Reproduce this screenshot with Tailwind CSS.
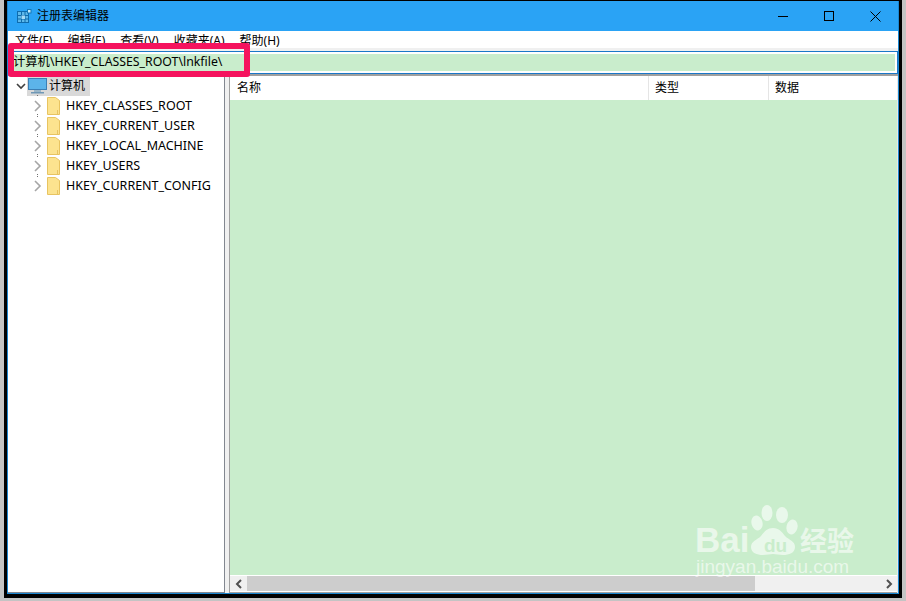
<!DOCTYPE html>
<html lang="zh-CN">
<head>
    <meta charset="UTF-8">
    <title>注册表编辑器</title>
    <script src="https://cdn.jsdelivr.net/npm/@tailwindcss/browser@4"></script>
</head>
<body class="bg-[#c4c4c4] overflow-hidden">
    <div class="relative w-[906px] h-[601px] pl-[4px] pr-[4px] pb-[3px] font-['Noto_Sans','Noto_Sans_CJK_SC',sans-serif] text-xs text-black">
        <div class="h-full bg-black pl-[3px] pr-[3px] pt-[1px] pb-[4px]">
            <div class="h-full flex flex-col bg-white border-x border-b border-[#1a86d0]">
                <!-- title bar -->
                <div class="h-[30px] shrink-0 bg-[#2aa3f5] flex items-center">
                    <svg class="ml-[8px]" width="16" height="16" viewBox="0 0 16 16">
                        <rect x="1.5" y="3.5" width="11" height="11" fill="#5cb8ea" stroke="#0f6cad"/>
                        <path d="M5.5 3v12M9 3v12M1 7.5h12M1 11h12" stroke="#0f6cad"/>
                        <rect x="5.5" y="7.5" width="3.5" height="3.5" fill="#a6dcf6"/>
                        <rect x="11.5" y="1.5" width="3.5" height="3.5" fill="#c6ecfb" stroke="#1478b8"/>
                    </svg>
                    <span class="ml-[5px]">注册表编辑器</span>
                    <div class="ml-auto flex items-center">
                        <div class="w-[46px] h-[30px] flex items-center justify-center">
                            <div class="w-[10px] h-px bg-black"></div>
                        </div>
                        <div class="w-[46px] h-[30px] flex items-center justify-center">
                            <div class="w-[10px] h-[10px] border border-black"></div>
                        </div>
                        <div class="w-[46px] h-[30px] flex items-center justify-center">
                            <svg width="11" height="11" viewBox="0 0 11 11"><path d="M.5.5l10 10M10.5.5l-10 10" stroke="#000"/></svg>
                        </div>
                    </div>
                </div>
                <!-- menu -->
                <div class="h-[17px] shrink-0 flex items-center gap-[15px] pl-[7px] pt-[3px]">
                    <span>文件(F)</span><span>编辑(E)</span><span>查看(V)</span><span>收藏夹(A)</span><span>帮助(H)</span>
                </div>
                <div class="h-[3px] shrink-0 bg-[#f0f0f0]"></div>
                <!-- address -->
                <div class="h-[23px] shrink-0 border border-[#1a78c8] p-[2px] bg-white">
                    <div class="h-full bg-[#c9edcc] flex items-center pl-[2px] whitespace-nowrap text-[12.3px]">计算机\HKEY_CLASSES_ROOT\lnkfile\</div>
                </div>
                <div class="h-[2px] shrink-0 bg-[#a0a0a0]"></div>
                <!-- panes -->
                <div class="flex-1 flex min-h-0">
                    <div class="w-[217px] border-r border-b border-[#828790] bg-white pl-[4px] text-[12.5px]">
                        <div class="h-[20px] flex items-center">
                            <svg class="ml-[4px]" width="10" height="10" viewBox="0 0 10 10"><path d="M1 3l4 4 4-4" fill="none" stroke="#404040" stroke-width="1.6"/></svg>
                            <div class="ml-[1px] h-[20px] w-[63px] bg-[#d9d9d9] flex items-center text-xs">
                                <svg class="ml-[1px]" width="20" height="18" viewBox="0 0 20 18">
                                    <rect x=".5" y="1.5" width="18" height="11" fill="#5cb4ea" stroke="#3b7fb5"/>
                                    <rect x="6" y="13" width="7" height="2" fill="#9ab6c8"/>
                                    <rect x="3" y="15" width="13" height="1.5" fill="#6f97b5"/>
                                </svg>
                                <span class="ml-[1px]">计算机</span>
                            </div>
                        </div>
                        <div class="relative h-[20px] flex items-center">
                            <div class="absolute left-[25px] top-[-1px] w-px h-px bg-[#707070]"></div>
                            <svg class="ml-[22px]" width="8" height="12" viewBox="0 0 8 12"><path d="M1 1l5 5-5 5" fill="none" stroke="#a6a6a6" stroke-width="1.6"/></svg>
                            <svg class="ml-[5px]" width="14" height="18" viewBox="0 0 14 18"><path d="M.5.5h8l4 3v14H.5z" fill="#fce38f" stroke="#e8c461"/><path d="M10.5 13v4.5" stroke="#e8c461"/></svg>
                            <span class="ml-[5px]">HKEY_CLASSES_ROOT</span>
                        </div>
                        <div class="relative h-[20px] flex items-center">
                            <div class="absolute left-[25px] top-[-2px] w-px h-[3px] border-y border-[#707070]"></div>
                            <svg class="ml-[22px]" width="8" height="12" viewBox="0 0 8 12"><path d="M1 1l5 5-5 5" fill="none" stroke="#a6a6a6" stroke-width="1.6"/></svg>
                            <svg class="ml-[5px]" width="14" height="18" viewBox="0 0 14 18"><path d="M.5.5h8l4 3v14H.5z" fill="#fce38f" stroke="#e8c461"/><path d="M10.5 13v4.5" stroke="#e8c461"/></svg>
                            <span class="ml-[5px]">HKEY_CURRENT_USER</span>
                        </div>
                        <div class="relative h-[20px] flex items-center">
                            <div class="absolute left-[25px] top-[-2px] w-px h-[3px] border-y border-[#707070]"></div>
                            <svg class="ml-[22px]" width="8" height="12" viewBox="0 0 8 12"><path d="M1 1l5 5-5 5" fill="none" stroke="#a6a6a6" stroke-width="1.6"/></svg>
                            <svg class="ml-[5px]" width="14" height="18" viewBox="0 0 14 18"><path d="M.5.5h8l4 3v14H.5z" fill="#fce38f" stroke="#e8c461"/><path d="M10.5 13v4.5" stroke="#e8c461"/></svg>
                            <span class="ml-[5px]">HKEY_LOCAL_MACHINE</span>
                        </div>
                        <div class="relative h-[20px] flex items-center">
                            <div class="absolute left-[25px] top-[-2px] w-px h-[3px] border-y border-[#707070]"></div>
                            <svg class="ml-[22px]" width="8" height="12" viewBox="0 0 8 12"><path d="M1 1l5 5-5 5" fill="none" stroke="#a6a6a6" stroke-width="1.6"/></svg>
                            <svg class="ml-[5px]" width="14" height="18" viewBox="0 0 14 18"><path d="M.5.5h8l4 3v14H.5z" fill="#fce38f" stroke="#e8c461"/><path d="M10.5 13v4.5" stroke="#e8c461"/></svg>
                            <span class="ml-[5px]">HKEY_USERS</span>
                        </div>
                        <div class="relative h-[20px] flex items-center">
                            <div class="absolute left-[25px] top-[-2px] w-px h-[3px] border-y border-[#707070]"></div>
                            <svg class="ml-[22px]" width="8" height="12" viewBox="0 0 8 12"><path d="M1 1l5 5-5 5" fill="none" stroke="#a6a6a6" stroke-width="1.6"/></svg>
                            <svg class="ml-[5px]" width="14" height="18" viewBox="0 0 14 18"><path d="M.5.5h8l4 3v14H.5z" fill="#fce38f" stroke="#e8c461"/><path d="M10.5 13v4.5" stroke="#e8c461"/></svg>
                            <span class="ml-[5px]">HKEY_CURRENT_CONFIG</span>
                        </div>
                    </div>
                    <div class="w-[4px] bg-[#f0f0f0]"></div>
                    <div class="flex-1 flex flex-col border-l border-r border-l-[#a0a0a0] border-r-[#e8e8e8] min-w-0">
                        <div class="h-[24px] shrink-0 flex bg-white">
                            <div class="w-[419px] border-r border-[#e5e5e5] pl-[7px] flex items-center">名称</div>
                            <div class="w-[120px] border-r border-[#e5e5e5] pl-[6px] flex items-center">类型</div>
                            <div class="flex-1 pl-[6px] flex items-center">数据</div>
                        </div>
                        <div class="flex-1 bg-[#c9edcc]"></div>
                        <div class="shrink-0 h-[18px] bg-white border-b border-[#a0a0a0] pt-px">
                            <div class="h-[15px] flex items-center bg-[#f0f0f0]">
                                <div class="w-[17px] flex justify-center">
                                    <svg width="8" height="10" viewBox="0 0 8 10"><path d="M6 1L2 5l4 4" fill="none" stroke="#505050" stroke-width="2"/></svg>
                                </div>
                                <div class="w-[508px] h-full bg-[#cdcdcd]"></div>
                                <div class="flex-1"></div>
                                <div class="w-[17px] flex justify-center">
                                    <svg width="8" height="10" viewBox="0 0 8 10"><path d="M2 1l4 4-4 4" fill="none" stroke="#505050" stroke-width="2"/></svg>
                                </div>
                            </div>
                        </div>
                    </div>
                </div>
            </div>
        </div>

        <!-- annotation box -->
        <div class="absolute left-[8px] top-[43px] w-[242px] h-[34px] border-[6px] border-[#f5135e] rounded-[3px]"></div>

        <!-- watermark -->
        <div class="absolute left-[680px] top-[490px] w-[190px] h-[100px] text-white/60">
            <svg class="absolute left-0 top-0" width="190" height="100" viewBox="0 0 190 100" fill="#fff" fill-opacity=".6">
                <ellipse cx="77" cy="33" rx="5.5" ry="7.5" transform="rotate(-15 77 33)"/>
                <ellipse cx="87" cy="23" rx="5.5" ry="8"/>
                <ellipse cx="102" cy="25" rx="6" ry="8"/>
                <ellipse cx="112" cy="37" rx="5.5" ry="7.5" transform="rotate(15 112 37)"/>
                <path d="M93 38c-6 0-9 4-12 8c-4 4-10 5-10 11c0 6 6 8 12 8c4 0 7-1 10-1s6 1 10 1c6 0 12-2 12-8c0-6-6-7-10-11c-3-4-6-8-12-8z"/>
            </svg>
            <div class="absolute left-[15px] top-[32px] font-['Liberation_Sans',sans-serif] font-bold text-[35px] leading-[36px] whitespace-nowrap">Bai</div>
            <div class="absolute left-[84px] top-[46px] font-['Liberation_Sans',sans-serif] font-bold text-[#c9edcc] text-[19px] leading-[20px]">du</div>
            <div class="absolute left-[120px] top-[38px] font-bold text-[27px] leading-[26px] whitespace-nowrap">经验</div>
            <div class="absolute left-[16px] top-[67px] font-['Liberation_Sans',sans-serif] text-[19px] leading-[20px] whitespace-nowrap">jingyan.baidu.com</div>
        </div>
    </div>
</body>
</html>
